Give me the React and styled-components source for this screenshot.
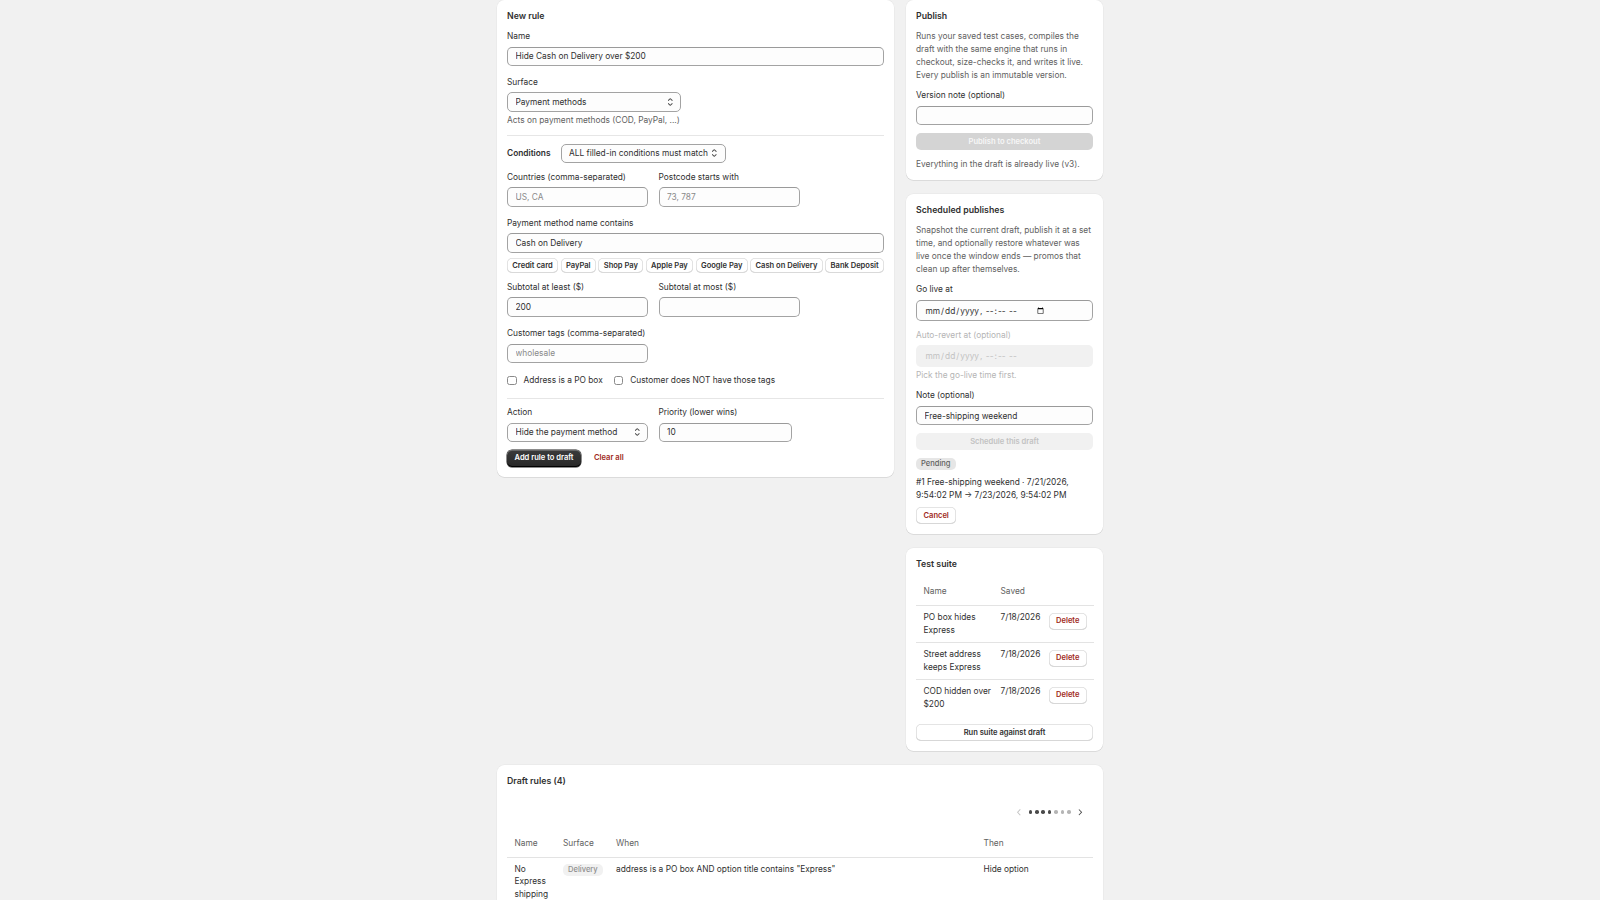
import React from "react";
import styled, { createGlobalStyle, css } from "styled-components";

const FONT = `Inter, "Noto Sans", "Liberation Sans", sans-serif`;
const BODY = 8.33;
const SMALL = 7.55;

const GlobalStyle = createGlobalStyle`
  * { box-sizing: border-box; }
  html, body { margin: 0; padding: 0; background: #f1f1f1; }
  body {
    font-family: ${FONT};
    font-size: ${BODY}px;
    line-height: 12.5px;
    color: #303030;
    -webkit-font-smoothing: antialiased;
  }
  button, input, select { font-family: inherit; }
`;

const Page = styled.main`
  width: 606px;
  margin: 0 auto;
  padding-bottom: 40px;
  display: flex;
  flex-direction: column;
  gap: 14px;
`;

const TopGrid = styled.div`
  display: grid;
  grid-template-columns: 397px 197px;
  column-gap: 12px;
  align-items: start;
`;

const Column = styled.div`
  display: flex;
  flex-direction: column;
  gap: 14px;
`;

const Card = styled.section`
  background: #fff;
  border-radius: 7.5px;
  padding: 10px;
  box-shadow: 0 0.8px 0 rgba(26, 26, 26, 0.1), 0 0 0 0.5px rgba(0, 0, 0, 0.05);
  display: flex;
  flex-direction: column;
  gap: 7.5px;
  min-width: 0;
`;

const Title = styled.h2`
  margin: 0;
  font-size: 8.75px;
  line-height: 12.5px;
  font-weight: 600;
  color: #303030;
`;

const Text = styled.p`
  margin: 0;
  line-height: ${(p) => (p.$lh ? `${p.$lh}px` : "12.5px")};
  color: ${(p) =>
    p.$tone === "subdued" ? "#616161" : p.$tone === "disabled" ? "#b5b5b5" : "#303030"};
`;

const Stack = styled.div`
  display: flex;
  flex-direction: column;
  gap: ${(p) => p.$gap}px;
`;

const Row = styled.div`
  display: flex;
  align-items: ${(p) => p.$align || "flex-start"};
  gap: ${(p) => p.$gap || 10.5}px;
  margin-top: ${(p) => p.$mt || 0}px;
`;

const Field = styled.div`
  display: flex;
  flex-direction: column;
  gap: 4px;
  width: ${(p) => (p.$w ? `${p.$w}px` : "auto")};
`;

const Label = styled.label`
  color: ${(p) => (p.$disabled ? "#b5b5b5" : "#303030")};
  line-height: 12.5px;
`;

const Help = styled.div`
  margin-top: -1.5px;
  color: ${(p) => (p.$disabled ? "#b5b5b5" : "#616161")};
`;

const Input = styled.input`
  display: block;
  width: ${(p) => (p.$w ? `${p.$w}px` : "100%")};
  height: 19.5px;
  border: 1px solid #a3a3a3;
  border-top-color: #9a9a9a;
  border-radius: 5px;
  background: #fdfdfd;
  padding: 0 7.5px;
  font-size: ${BODY}px;
  color: #303030;
  outline: none;
  &::placeholder {
    color: #8a8a8a;
  }
`;

const DateInput = styled(Input)`
  display: flex;
  height: 21.5px;
  &::-webkit-datetime-edit {
    flex: 0 1 auto;
  }
  &::-webkit-calendar-picker-indicator {
    width: 7.5px;
    height: 7.5px;
    padding: 0;
    margin-left: -1.5px;
  }
  &:disabled {
    background: #f1f1f1;
    border-color: transparent;
    color: #c2c2c2;
  }
  &:disabled::-webkit-calendar-picker-indicator {
    display: none;
  }
`;

const SelectWrap = styled.div`
  position: relative;
  width: ${(p) => p.$w}px;
  height: 19.5px;
`;

const SelectEl = styled.select`
  appearance: none;
  -webkit-appearance: none;
  width: 100%;
  height: 100%;
  border: 1px solid #a3a3a3;
  border-radius: 5px;
  background: #fdfdfd;
  padding: 0 14px 0 7.5px;
  font-size: ${BODY}px;
  color: #303030;
  outline: none;
`;

const SelectIcon = styled.svg`
  position: absolute;
  right: 5px;
  top: 50%;
  transform: translateY(-50%);
  width: 12.5px;
  height: 12.5px;
  fill: #4a4a4a;
  pointer-events: none;
`;

function Select({ w, value }) {
  return (
    <SelectWrap $w={w}>
      <SelectEl defaultValue={value}>
        <option>{value}</option>
      </SelectEl>
      <SelectIcon viewBox="0 0 20 20">
        <path d="M10.884 4.323a1.25 1.25 0 0 0-1.768 0l-2.646 2.647a.75.75 0 0 0 1.06 1.06l2.47-2.470 2.47 2.470a.75.75 0 1 0 1.06-1.060l-2.646-2.647Z" />
        <path d="m13.53 13.03-2.646 2.647a1.25 1.25 0 0 1-1.768 0l-2.646-2.647a.75.75 0 0 1 1.06-1.06l2.47 2.47 2.47-2.47a.75.75 0 0 1 1.06 1.06Z" />
      </SelectIcon>
    </SelectWrap>
  );
}

const Divider = styled.hr`
  margin: ${(p) => p.$mt || 0}px 0 0;
  border: 0;
  border-top: 1px solid #e6e6e6;
  width: 100%;
`;

const Strong = styled.span`
  font-weight: 600;
`;

const Chips = styled.div`
  display: flex;
  flex-wrap: nowrap;
  gap: 2.6px;
  margin-top: -2px;
`;

const Chip = styled.button`
  flex: none;
  height: 15px;
  padding: 0 5.3px;
  border: 0;
  border-radius: 5px;
  background: #fff;
  color: #303030;
  font-size: ${SMALL}px;
  font-weight: 600;
  box-shadow: inset 0 0 0 0.8px #dcdcdc, inset 0 -1px 0 #d0d0d0;
  cursor: pointer;
`;

const variants = {
  primary: css`
    background: linear-gradient(#3b3b3b, #272727);
    color: #fff;
    box-shadow: inset 0 1px 0 rgba(255, 255, 255, 0.22), inset 0 -1px 0 #000, 0 0 0 0.5px #1a1a1a;
  `,
  primaryDisabled: css`
    background: #d4d4d4;
    color: #f7f7f7;
  `,
  secondary: css`
    background: #fff;
    color: #303030;
    box-shadow: inset 0 0 0 0.8px #dcdcdc, inset 0 -1px 0 #c9c9c9;
  `,
  critical: css`
    background: #fff;
    color: #a02a1c;
    box-shadow: inset 0 0 0 0.8px #dcdcdc, inset 0 -1px 0 #c9c9c9;
  `,
  secondaryDisabled: css`
    background: #f1f1f1;
    color: #c2c2c2;
  `,
  plainCritical: css`
    background: transparent;
    color: #a02a1c;
    padding: 0;
  `,
};

const Button = styled.button`
  height: ${(p) => p.$h || 17}px;
  padding: 0 7.5px;
  border: 0;
  border-radius: 5px;
  font-size: ${SMALL}px;
  font-weight: 600;
  line-height: 1;
  cursor: pointer;
  white-space: nowrap;
  width: ${(p) => (p.$full ? "100%" : "auto")};
  align-self: ${(p) => (p.$full ? "stretch" : "flex-start")};
  ${(p) => variants[p.$variant || "secondary"]}
`;

const CheckLabel = styled.label`
  display: inline-flex;
  align-items: center;
  gap: 7px;
`;

const Check = styled.input.attrs({ type: "checkbox" })`
  appearance: none;
  -webkit-appearance: none;
  margin: 0;
  width: 9.5px;
  height: 9.5px;
  border: 1px solid #8a8a8a;
  border-radius: 2.5px;
  background: #fff;
`;

const Badge = styled.span`
  align-self: flex-start;
  display: inline-flex;
  align-items: center;
  height: 12.5px;
  padding: 0 5px;
  border-radius: 5px;
  font-size: ${SMALL}px;
  font-weight: 500;
  background: ${(p) => (p.$muted ? "#f1f1f1" : "#e6e6e6")};
  color: ${(p) => (p.$muted ? "#8f8f8f" : "#616161")};
`;

const Block = styled.div`
  display: flex;
  flex-direction: column;
  gap: 6px;
`;

/* ---------- tables ---------- */
const Table = styled.table`
  border-collapse: collapse;
  table-layout: fixed;
  width: ${(p) => p.$width}px;
`;

const Th = styled.th`
  text-align: left;
  font-weight: 400;
  color: #616161;
  padding: ${(p) => p.$pad || "7px 0 7.5px 7.5px"};
  border-bottom: 1px solid #e3e3e3;
  vertical-align: top;
`;

const Td = styled.td`
  padding: ${(p) => p.$pad || "5px 0 6px 7.5px"};
  vertical-align: top;
  white-space: ${(p) => (p.$nowrap ? "nowrap" : "normal")};
  tr:not(:last-child) > & {
    border-bottom: 1px solid #e3e3e3;
  }
`;

const Pager = styled.div`
  display: flex;
  justify-content: flex-end;
  align-items: center;
  padding: 8px 4.5px 7.5px 0;
`;

const PagerButton = styled.button`
  width: 17.5px;
  height: 17.5px;
  padding: 0;
  border: 0;
  background: transparent;
  display: flex;
  align-items: center;
  justify-content: center;
  svg {
    width: 12.5px;
    height: 12.5px;
    fill: ${(p) => (p.disabled ? "#c4c4c4" : "#4a4a4a")};
  }
`;

const Pips = styled.div`
  display: flex;
  gap: 2.9px;
  margin: 0 0.5px;
`;

const Pip = styled.span`
  width: 3.5px;
  height: 3.5px;
  border-radius: 50%;
  background: ${(p) => (p.$on ? "#4a4a4a" : "#b5b5b5")};
`;

const ChevronLeft = () => (
  <svg viewBox="0 0 20 20">
    <path d="M11.764 5.204a.75.75 0 0 1 .032 1.06l-3.516 3.736 3.516 3.736a.75.75 0 1 1-1.092 1.028l-4-4.25a.75.75 0 0 1 0-1.028l4-4.25a.75.75 0 0 1 1.06-.032Z" />
  </svg>
);
const ChevronRight = () => (
  <svg viewBox="0 0 20 20">
    <path d="M7.72 14.53a.75.75 0 0 1 0-1.06l3.47-3.47-3.47-3.47a.75.75 0 0 1 1.06-1.06l4 4a.75.75 0 0 1 0 1.06l-4 4a.75.75 0 0 1-1.06 0Z" />
  </svg>
);

const paymentChips = [
  "Credit card",
  "PayPal",
  "Shop Pay",
  "Apple Pay",
  "Google Pay",
  "Cash on Delivery",
  "Bank Deposit",
];

const tests = [
  ["PO box hides Express", "7/18/2026"],
  ["Street address keeps Express", "7/18/2026"],
  ["COD hidden over $200", "7/18/2026"],
];

const draftRules = [
  {
    name: "No Express shipping",
    surface: "Delivery",
    when: 'address is a PO box AND option title contains "Express"',
    then: "Hide option",
  },
  {
    name: "Hide COD over $200",
    surface: "Payment",
    when: 'subtotal at least $200 AND method name contains "Cash on Delivery"',
    then: "Hide method",
  },
  {
    name: "Wholesale terms",
    surface: "Payment",
    when: 'customer has tag "wholesale"',
    then: "Rename method",
  },
  {
    name: "Standard first",
    surface: "Delivery",
    when: 'option title contains "Standard"',
    then: "Move to top",
  },
];

const DRAFT_PAD_TH = "8.5px 0 8px 7.5px";
const DRAFT_PAD_TD = "4.5px 0 6px 7.5px";

export default function App() {
  return (
    <>
      <GlobalStyle />
      <Page>
        <TopGrid>
          <Card>
            <Title>New rule</Title>
            <Stack $gap={9.5}>
              <Field>
                <Label>Name</Label>
                <Input defaultValue="Hide Cash on Delivery over $200" />
              </Field>
              <Field>
                <Label>Surface</Label>
                <Select w={174} value="Payment methods" />
                <Help>Acts on payment methods (COD, PayPal, ...)</Help>
              </Field>
            </Stack>
            <Divider $mt={1} />
            <Row $align="center" $gap={10}>
              <Strong>Conditions</Strong>
              <Select w={165} value="ALL filled-in conditions must match" />
            </Row>
            <Stack $gap={10}>
              <Row>
                <Field $w={141}>
                  <Label>Countries (comma-separated)</Label>
                  <Input placeholder="US, CA" />
                </Field>
                <Field $w={141}>
                  <Label>Postcode starts with</Label>
                  <Input placeholder="73, 787" />
                </Field>
              </Row>
              <Field>
                <Label>Payment method name contains</Label>
                <Input defaultValue="Cash on Delivery" />
              </Field>
            </Stack>
            <Chips>
              {paymentChips.map((c) => (
                <Chip key={c}>{c}</Chip>
              ))}
            </Chips>
            <Stack $gap={10.5}>
              <Row>
                <Field $w={141}>
                  <Label>Subtotal at least ($)</Label>
                  <Input defaultValue="200" />
                </Field>
                <Field $w={141}>
                  <Label>Subtotal at most ($)</Label>
                  <Input />
                </Field>
              </Row>
              <Field $w={141}>
                <Label>Customer tags (comma-separated)</Label>
                <Input placeholder="wholesale" />
              </Field>
              <Row $align="center" $gap={11} $mt={0.5}>
                <CheckLabel>
                  <Check />
                  Address is a PO box
                </CheckLabel>
                <CheckLabel>
                  <Check />
                  Customer does NOT have those tags
                </CheckLabel>
              </Row>
            </Stack>
            <Divider $mt={3.5} />
            <Row>
              <Field $w={141}>
                <Label>Action</Label>
                <Select w={141} value="Hide the payment method" />
              </Field>
              <Field $w={133.5}>
                <Label>Priority (lower wins)</Label>
                <Input defaultValue="10" />
              </Field>
            </Row>
            <Row $align="center" $gap={13}>
              <Button $variant="primary">Add rule to draft</Button>
              <Button $variant="plainCritical">Clear all</Button>
            </Row>
          </Card>

          <Column>
            <Card>
              <Title>Publish</Title>
              <Text $tone="subdued" $lh={12.9}>
                Runs your saved test cases, compiles the draft with the same engine that runs in
                checkout, size-checks it, and writes it live. Every publish is an immutable
                version.
              </Text>
              <Field>
                <Label>Version note (optional)</Label>
                <Input />
              </Field>
              <Button $variant="primaryDisabled" $full $h={17.5} disabled>
                Publish to checkout
              </Button>
              <Text $tone="subdued">Everything in the draft is already live (v3).</Text>
            </Card>

            <Card>
              <Title>Scheduled publishes</Title>
              <Text $tone="subdued" $lh={12.9}>
                Snapshot the current draft, publish it at a set time, and optionally restore
                whatever was live once the window ends — promos that clean up after themselves.
              </Text>
              <Field>
                <Label>Go live at</Label>
                <DateInput type="datetime-local" />
              </Field>
              <Field>
                <Label $disabled>Auto-revert at (optional)</Label>
                <DateInput type="datetime-local" disabled />
                <Help $disabled>Pick the go-live time first.</Help>
              </Field>
              <Field>
                <Label>Note (optional)</Label>
                <Input defaultValue="Free-shipping weekend" />
              </Field>
              <Button $variant="secondaryDisabled" $full $h={17.5} disabled>
                Schedule this draft
              </Button>
              <Block>
                <Badge>Pending</Badge>
                <Text>#1 Free-shipping weekend · 7/21/2026, 9:54:02 PM → 7/23/2026, 9:54:02 PM</Text>
                <Button $variant="critical">Cancel</Button>
              </Block>
            </Card>

            <Card>
              <Title>Test suite</Title>
              <Table $width={178}>
                <colgroup>
                  <col style={{ width: 77 }} />
                  <col style={{ width: 49.5 }} />
                  <col style={{ width: 51.5 }} />
                </colgroup>
                <thead>
                  <tr>
                    <Th>Name</Th>
                    <Th>Saved</Th>
                    <Th />
                  </tr>
                </thead>
                <tbody>
                  {tests.map(([name, saved]) => (
                    <tr key={name}>
                      <Td>{name}</Td>
                      <Td $nowrap>{saved}</Td>
                      <Td $pad="6.5px 0 5px 6px">
                        <Button $variant="critical">Delete</Button>
                      </Td>
                    </tr>
                  ))}
                </tbody>
              </Table>
              <Button $variant="secondary" $full $h={17.5}>
                Run suite against draft
              </Button>
            </Card>
          </Column>
        </TopGrid>

        <Card>
          <Title>Draft rules (4)</Title>
          <div>
            <Pager>
              <PagerButton disabled aria-label="Scroll table left">
                <ChevronLeft />
              </PagerButton>
              <Pips>
                {[1, 1, 1, 1, 0, 0, 0].map((on, i) => (
                  <Pip key={i} $on={on} />
                ))}
              </Pips>
              <PagerButton aria-label="Scroll table right">
                <ChevronRight />
              </PagerButton>
            </Pager>
            <Table $width={586}>
              <colgroup>
                <col style={{ width: 48.5 }} />
                <col style={{ width: 53 }} />
                <col style={{ width: 367.5 }} />
                <col style={{ width: 117 }} />
              </colgroup>
              <thead>
                <tr>
                  <Th $pad={DRAFT_PAD_TH}>Name</Th>
                  <Th $pad={DRAFT_PAD_TH}>Surface</Th>
                  <Th $pad={DRAFT_PAD_TH}>When</Th>
                  <Th $pad={DRAFT_PAD_TH}>Then</Th>
                </tr>
              </thead>
              <tbody>
                {draftRules.map((r) => (
                  <tr key={r.name}>
                    <Td $pad={DRAFT_PAD_TD}>{r.name}</Td>
                    <Td $pad={DRAFT_PAD_TD}>
                      <Badge $muted>{r.surface}</Badge>
                    </Td>
                    <Td $pad={DRAFT_PAD_TD}>{r.when}</Td>
                    <Td $pad={DRAFT_PAD_TD}>{r.then}</Td>
                  </tr>
                ))}
              </tbody>
            </Table>
          </div>
        </Card>
      </Page>
    </>
  );
}
